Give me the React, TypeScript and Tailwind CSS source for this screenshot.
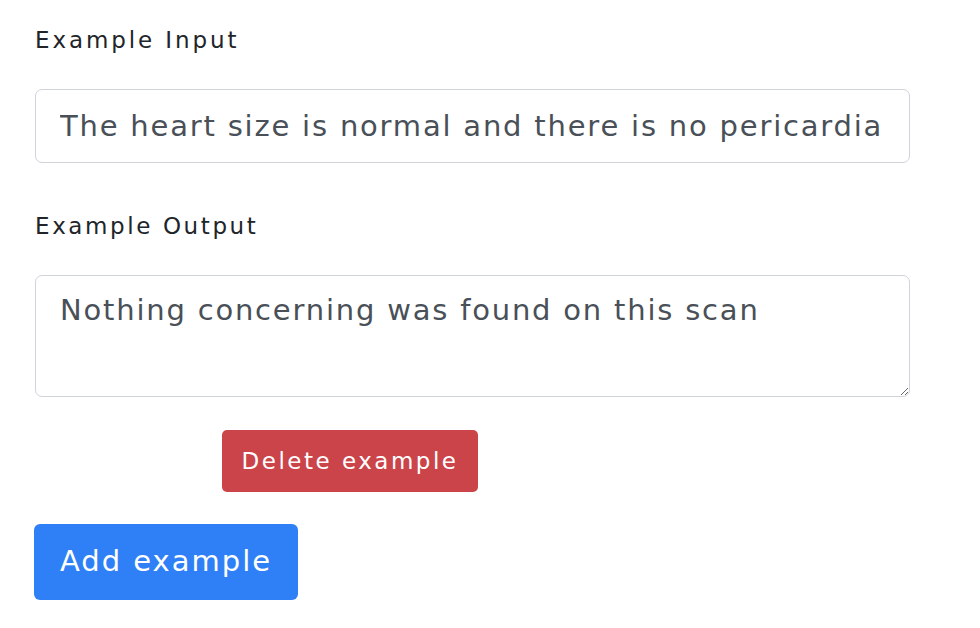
import React from "react";

export default function App() {
  return (
    <div className="w-[980px] h-[628px] bg-white font-['DejaVu_Sans','Open_Sans',sans-serif]">
      <div className="pl-[35px] pt-[22px] w-[910px] flex flex-col">
        <label className="text-[23px] leading-[36px] tracking-[2.9px] text-[#212529] mb-[31px]">
          Example Input
        </label>
        <input
          readOnly
          value="The heart size is normal and there is no pericardial effusion"
          className="h-[74px] w-[875px] rounded-[7px] border-[1.5px] border-[#ced4da] px-[24px] text-[29px] tracking-[1.8px] text-[#495057] outline-none"
        />
        <label className="mt-[45px] text-[23px] leading-[36px] tracking-[2.6px] text-[#212529] mb-[31px]">
          Example Output
        </label>
        <textarea
          readOnly
          value="Nothing concerning was found on this scan"
          className="h-[122px] w-[875px] rounded-[7px] border-[1.5px] border-[#ced4da] px-[24px] pt-[12px] text-[29px] leading-[45px] tracking-[1.8px] text-[#495057] outline-none resize-y block"
        />
        <div className="mt-[33px] pl-[187px]">
          <button className="h-[62px] w-[256px] rounded-[5px] bg-[#cb444a] text-white text-[23px] tracking-[2.5px] flex items-center justify-center">
            Delete example
          </button>
        </div>
        <div className="mt-[32px]">
          <button className="h-[76px] w-[264px] rounded-[6px] bg-[#2f80f6] text-white text-[29px] tracking-[2px] flex items-center justify-center -ml-px">
            Add example
          </button>
        </div>
      </div>
    </div>
  );
}
